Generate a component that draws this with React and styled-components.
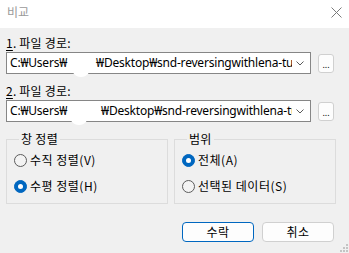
import React from "react"
import styled, { createGlobalStyle } from "styled-components"

const Global = createGlobalStyle`
  html, body { margin: 0; padding: 0; background: #f0f0f0; }
  * { box-sizing: border-box; }
`

const Window = styled.div`
  position: relative;
  width: 349px;
  height: 253px;
  overflow: hidden;
  display: flex;
  flex-direction: column;
  background: #f0f0f0;
  font-family: "Noto Sans CJK KR", "Noto Sans", sans-serif;
  font-size: 12px;
  color: #000;
`

const TitleBar = styled.div`
  height: 28px;
  flex: none;
  background: #fff;
  display: flex;
  align-items: center;
  justify-content: space-between;
  padding: 0 7px 4px 7px;
  color: #9a9a9a;
  line-height: 16px;
`

const Body = styled.div`
  flex: 1;
  padding: 7px 6px 0 6px;
  display: flex;
  flex-direction: column;
`

const Field = styled.div`
  margin-bottom: ${(p) => (p.last ? "0" : "9px")};
`

const Label = styled.div`
  line-height: 16px;
  margin-bottom: 1px;
  letter-spacing: 0.2px;
  & u { text-decoration: underline; text-underline-offset: 2px; }
`

const Row = styled.div`
  display: flex;
  align-items: center;
  gap: 7px;
`

const Combo = styled.div`
  position: relative;
  width: 305px;
  height: 22px;
  background: #fff;
  border: 1px solid #868686;
  display: flex;
  align-items: center;
  padding-left: 3px;
`

const ComboText = styled.span`
  flex: 1;
  min-width: 0;
  white-space: nowrap;
  overflow: hidden;
  line-height: 20px;
  font-family: "Noto Sans", "Noto Sans CJK KR", sans-serif;
  letter-spacing: -0.2px;
`

const Redact = styled.span`
  display: inline-block;
  width: ${(p) => p.w}px;
  height: 20px;
  vertical-align: middle;
`

const Blob = styled.span`
  position: absolute;
  top: 2px;
  width: 20px;
  height: 22px;
  border-radius: 50%;
  background: #fff;
`

const Chevron = styled.span`
  width: 18px;
  flex: none;
  display: flex;
  justify-content: center;
  padding-right: 3px;
`

const Browse = styled.div`
  width: 16px;
  height: 19px;
  flex: none;
  background: #fdfdfd;
  border: 1px solid #d0d0d0;
  border-radius: 3px;
  display: flex;
  align-items: flex-end;
  justify-content: center;
  font-size: 9px;
  line-height: 11px;
  padding-bottom: 2px;
  font-family: "Noto Sans", sans-serif;
`

const Groups = styled.div`
  display: grid;
  grid-template-columns: 162px 162px;
  column-gap: 6px;
  margin-top: 9px;
`

const Group = styled.fieldset`
  margin: 0;
  height: 73px;
  border: 1px solid #dcdcdc;
  padding: 0 0 3px 7px;
  display: flex;
  flex-direction: column;
  & legend {
    padding: 0 2px;
    margin-left: 5px;
    line-height: 16px;
    letter-spacing: 0.3px;
  }
`

const Option = styled.div`
  height: 26px;
  display: flex;
  align-items: center;
  gap: 3px;
  line-height: 16px;
  letter-spacing: 0.5px;
`

const Radio = styled.span`
  width: 13px;
  height: 13px;
  flex: none;
  border-radius: 50%;
  border: 1px solid ${(p) => (p.on ? "#0067c0" : "#5c5c5c")};
  background: ${(p) => (p.on ? "#0067c0" : "#f3f3f3")};
  display: flex;
  align-items: center;
  justify-content: center;
  &::after {
    content: "";
    display: ${(p) => (p.on ? "block" : "none")};
    width: 5px;
    height: 5px;
    border-radius: 50%;
    background: #fff;
  }
`

const Footer = styled.div`
  display: flex;
  justify-content: flex-end;
  gap: 8px;
  margin-top: 18px;
  padding-right: 9px;
`

const Button = styled.div`
  width: 72px;
  height: 20px;
  border-radius: 4px;
  background: #fdfdfd;
  border: 1px solid ${(p) => (p.primary ? "#0067c0" : "#d0d0d0")};
  display: flex;
  align-items: center;
  justify-content: center;
  line-height: 16px;
  letter-spacing: 0.5px;
`

const Grip = styled.svg`
  position: absolute;
  right: 1px;
  bottom: 1px;
`

function PathCombo({ gap, blobLeft }) {
  return (
    <Combo>
      <ComboText>
        C:₩Users₩<Redact w={gap} />₩Desktop₩snd-reversingwithlena-tutorials
      </ComboText>
      <Chevron>
        <svg width="8" height="5" viewBox="0 0 8 5">
          <path d="M0.5 0.5 L4 4 L7.5 0.5" fill="none" stroke="#5a5a5a" strokeWidth="1" />
        </svg>
      </Chevron>
      <Blob style={{ left: blobLeft }} />
    </Combo>
  )
}

export default function App() {
  return (
    <Window>
      <Global />
      <TitleBar>
        <span>비교</span>
        <svg width="11" height="11" viewBox="0 0 11 11">
          <path d="M0.5 0.5 L10.5 10.5 M10.5 0.5 L0.5 10.5" stroke="#7a7a7a" strokeWidth="1" />
        </svg>
      </TitleBar>
      <Body>
        <Field>
          <Label><u>1</u>. 파일 경로:</Label>
          <Row>
            <PathCombo gap={29} blobLeft={64} />
            <Browse>...</Browse>
          </Row>
        </Field>
        <Field last>
          <Label><u>2</u>. 파일 경로:</Label>
          <Row>
            <PathCombo gap={34} blobLeft={62} />
            <Browse>...</Browse>
          </Row>
        </Field>
        <Groups>
          <Group>
            <legend>창 정렬</legend>
            <Option><Radio />수직 정렬(V)</Option>
            <Option><Radio on />수평 정렬(H)</Option>
          </Group>
          <Group>
            <legend>범위</legend>
            <Option><Radio on />전체(A)</Option>
            <Option><Radio />선택된 데이터(S)</Option>
          </Group>
        </Groups>
        <Footer>
          <Button primary>수락</Button>
          <Button>취소</Button>
        </Footer>
      </Body>
      <Grip width="8" height="8" viewBox="0 0 8 8">
        <rect x="6" y="0" width="2" height="2" fill="#c4c4c4" />
        <rect x="3" y="3" width="2" height="2" fill="#c4c4c4" />
        <rect x="6" y="3" width="2" height="2" fill="#c4c4c4" />
        <rect x="0" y="6" width="2" height="2" fill="#c4c4c4" />
        <rect x="3" y="6" width="2" height="2" fill="#c4c4c4" />
        <rect x="6" y="6" width="2" height="2" fill="#c4c4c4" />
      </Grip>
    </Window>
  )
}
